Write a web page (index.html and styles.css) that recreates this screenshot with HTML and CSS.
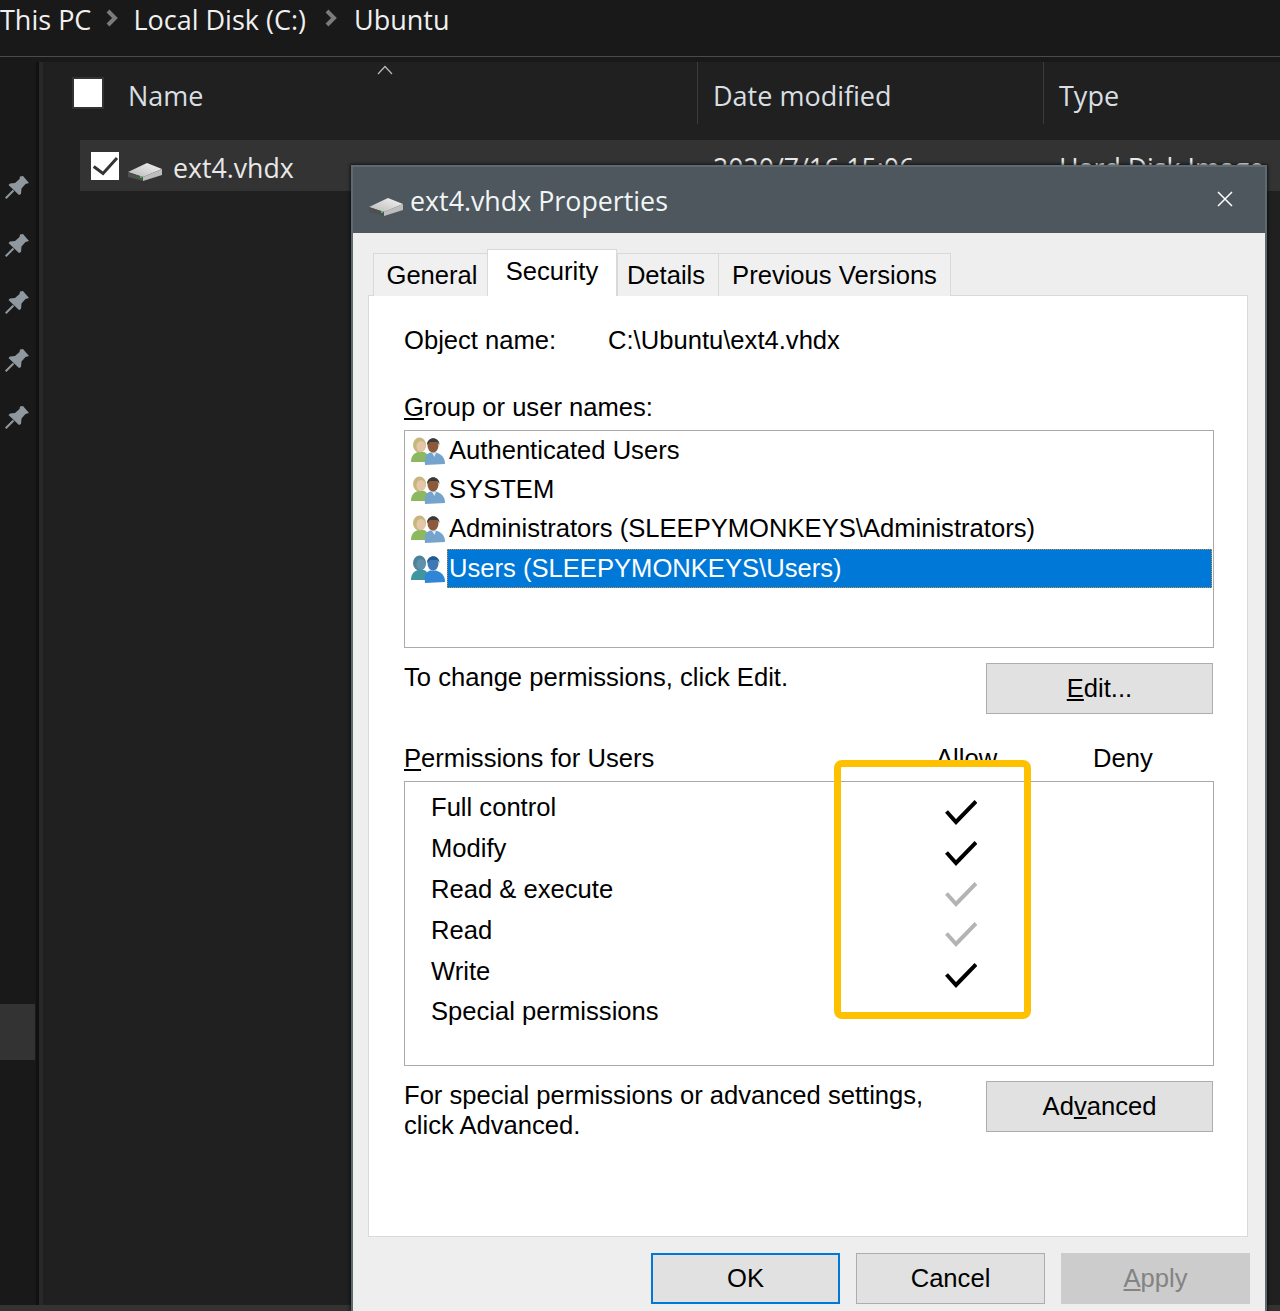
FILE: index.html
```html
<!DOCTYPE html>
<html lang="en">
<head>
<meta charset="utf-8">
<title>ext4.vhdx Properties</title>
<link rel="stylesheet" href="styles.css">
</head>
<body>
<svg class="defs" width="0" height="0" aria-hidden="true">
  <defs>
    <linearGradient id="drive-top" x1="0" y1="1" x2="1" y2="0">
      <stop offset="0" stop-color="#b9b9b9"/>
      <stop offset="1" stop-color="#f4f4f4"/>
    </linearGradient>
    <symbol id="drive" viewBox="0 0 34 20">
      <path d="M0 9 19 0 34 6 15 14Z" fill="url(#drive-top)"/>
      <path d="M0 9 15 14V18L0 14Z" fill="#4f4f4f"/>
      <path d="M15 14 34 6V12L15 18Z" fill="#bdbdbd"/>
      <rect x="12" y="13" width="2" height="2" fill="#3fc24a"/>
    </symbol>
    <symbol id="pin" viewBox="0 0 24 24">
      <path d="M18 1 24 8 20.500 9 16.500 13.500 16 19 14 20 3.500 10 5 8.500 10 8 14.500 4 15 1.500Z" fill="#8e989e"/>
      <path d="M8.500 15.500 0.700 23.300" stroke="#8e989e" stroke-width="2" fill="none"/>
    </symbol>
    <symbol id="people" viewBox="0 0 34 28">
      <path d="M0 25C0 19 3 16 7 15H13C16 16 17 18 17 25Z" fill="#8cb860"/>
      <ellipse cx="8.500" cy="8" rx="6.500" ry="7.500" fill="#c8b77c"/>
      <ellipse cx="10" cy="9.500" rx="4.500" ry="5.500" fill="#e6c6a8"/>
      <path d="M14 28C13 20 15 17 19 15.500H25C30 17 34 20 34 27Z" fill="#74a3cc"/>
      <ellipse cx="22" cy="8.500" rx="5.500" ry="7" fill="#8c5a3a"/>
      <path d="M16 8C16 -1 28.500 -1 28.500 8L26.500 5H19Z" fill="#3a3a3a"/>
      <path d="M21 16 23.500 20 25 16Z" fill="#dfeaf3"/>
    </symbol>
    <symbol id="people-on" viewBox="0 0 34 28">
      <path d="M0 25C0 19 3 16 7 15H13C16 16 17 18 17 25Z" fill="#3f96a0"/>
      <ellipse cx="8.500" cy="8" rx="6.500" ry="7.500" fill="#4f8298"/>
      <ellipse cx="10" cy="9.500" rx="4.500" ry="5.500" fill="#5f90ac"/>
      <path d="M14 28C13 20 15 17 19 15.500H25C30 17 34 20 34 27Z" fill="#2f86d6"/>
      <ellipse cx="22" cy="8.500" rx="5.500" ry="7" fill="#3f78b4"/>
      <path d="M16 8C16 -1 28.500 -1 28.500 8L26.500 5H19Z" fill="#1f5a94"/>
    </symbol>
    <symbol id="tick" viewBox="0 0 32 26">
      <path d="M1.500 12.500 11 23 31 2.500" fill="none" stroke="currentColor" stroke-width="4"/>
    </symbol>
  </defs>
</svg>

<div class="page">
  <header class="crumbs">
    <span>This PC</span>
    <svg class="chevron" viewBox="0 0 14 18"><path d="M3 2 10 9 3 16" fill="none" stroke="#7b7b7b" stroke-width="4"/></svg>
    <span>Local Disk (C:)</span>
    <svg class="chevron chevron-second" viewBox="0 0 14 18"><path d="M3 2 10 9 3 16" fill="none" stroke="#7b7b7b" stroke-width="4"/></svg>
    <span>Ubuntu</span>
  </header>

  <div class="explorer">
    <aside class="nav">
      <svg class="pin"><use href="#pin"/></svg>
      <svg class="pin"><use href="#pin"/></svg>
      <svg class="pin"><use href="#pin"/></svg>
      <svg class="pin"><use href="#pin"/></svg>
      <svg class="pin"><use href="#pin"/></svg>
      <div class="nav-selected"></div>
    </aside>
    <main class="files">
      <div class="columns">
        <div class="col col-name">
          <span class="box-empty"></span>
          <span>Name</span>
          <svg class="sort" viewBox="0 0 16 10"><path d="M1 9 8 1.500 15 9" fill="none" stroke="#bbb" stroke-width="1.200"/></svg>
        </div>
        <div class="col col-date">Date modified</div>
        <div class="col col-type">Type</div>
      </div>
      <div class="file-row">
        <div class="file-name">
          <span class="box-checked">
            <svg class="box-tick" viewBox="0 0 28 28"><path d="M2.700 14.500 12 21.500 26 6" fill="none" stroke="#333" stroke-width="3"/></svg>
          </span>
          <svg class="drive"><use href="#drive"/></svg>
          <span class="file-label">ext4.vhdx</span>
        </div>
        <div class="file-date">2020/7/16 15:06</div>
        <div class="file-type">Hard Disk Image</div>
      </div>
    </main>
  </div>
  <div class="statusbar"></div>

  <section class="dialog">
    <div class="titlebar">
      <svg class="drive"><use href="#drive"/></svg>
      <span class="title-text">ext4.vhdx Properties</span>
      <svg class="close" viewBox="0 0 16 16"><path d="M1 1 15 15M15 1 1 15" stroke="#fff" stroke-width="1.500" fill="none"/></svg>
    </div>
    <div class="dialog-body">
      <div class="tabs">
        <div class="tab tab-general">General</div>
        <div class="tab tab-active">Security</div>
        <div class="tab tab-details">Details</div>
        <div class="tab tab-versions">Previous Versions</div>
      </div>
      <div class="panel">
        <div class="object-row">
          <span class="object-label">Object name:</span>
          <span>C:\Ubuntu\ext4.vhdx</span>
        </div>
        <div class="label label-group"><u>G</u>roup or user names:</div>
        <div class="user-list">
          <div class="user"><svg class="people"><use href="#people"/></svg><span class="user-name">Authenticated Users</span></div>
          <div class="user"><svg class="people"><use href="#people"/></svg><span class="user-name">SYSTEM</span></div>
          <div class="user"><svg class="people"><use href="#people"/></svg><span class="user-name">Administrators (SLEEPYMONKEYS\Administrators)</span></div>
          <div class="user user-selected"><svg class="people"><use href="#people-on"/></svg><span class="user-name">Users (SLEEPYMONKEYS\Users)</span></div>
        </div>
        <div class="action-row">
          <span class="action-text">To change permissions, click Edit.</span>
          <div class="btn btn-wide"><span><u>E</u>dit...</span></div>
        </div>
        <div class="perm-head">
          <span class="perm-title"><u>P</u>ermissions for Users</span>
          <span class="perm-allow">Allow</span>
          <span class="perm-deny">Deny</span>
        </div>
        <div class="perm-list">
          <div class="perm"><span>Full control</span><svg class="tick"><use href="#tick"/></svg></div>
          <div class="perm"><span>Modify</span><svg class="tick"><use href="#tick"/></svg></div>
          <div class="perm"><span>Read &amp; execute</span><svg class="tick tick-off"><use href="#tick"/></svg></div>
          <div class="perm"><span>Read</span><svg class="tick tick-off"><use href="#tick"/></svg></div>
          <div class="perm"><span>Write</span><svg class="tick"><use href="#tick"/></svg></div>
          <div class="perm"><span>Special permissions</span></div>
        </div>
        <div class="action-row">
          <span class="action-text">For special permissions or advanced settings,<br>click Advanced.</span>
          <div class="btn btn-wide"><span>Ad<u>v</u>anced</span></div>
        </div>
      </div>
      <div class="footer">
        <div class="btn btn-foot btn-default">OK</div>
        <div class="btn btn-foot">Cancel</div>
        <div class="btn btn-foot btn-disabled"><span><u>A</u>pply</span></div>
      </div>
    </div>
  </section>

  <div class="highlight"></div>
</div>
</body>
</html>
```

FILE: styles.css
```css
* { box-sizing: border-box; }

html, body {
  margin: 0;
  padding: 0;
  background: #191919;
}

.defs { position: absolute; }

.page {
  position: relative;
  width: 1280px;
  height: 1311px;
  overflow: hidden;
  background: #191919;
  color: #e6e6e6;
  font-family: "Open Sans", "Noto Sans", sans-serif;
}

/* Explorer */
.crumbs {
  display: flex;
  align-items: center;
  height: 57px;
  padding-bottom: 18px;
  border-bottom: 1px solid #4a4a4a;
  font-size: 27px;
  color: #f0f0f0;
}

.chevron {
  width: 14px;
  height: 18px;
  margin: 0 14px 2px 14px;
}

.chevron-second {
  margin: 0 16px 2px 18px;
}

.explorer {
  display: flex;
  height: 1248px;
  padding-top: 5px;
}

.statusbar {
  height: 6px;
  background: #333;
}

.nav {
  display: flex;
  flex-direction: column;
  align-items: flex-start;
  width: 43px;
  padding: 113px 0 0 5px;
  background: linear-gradient(to right, #191919 36px, #111 36px, #111 39px, #282828 39px);
}

.pin {
  width: 24px;
  height: 24px;
  margin-bottom: 33.600px;
  flex: none;
}

.nav-selected {
  width: 35px;
  height: 56px;
  margin: 541px 0 0 -5px;
  background: #333;
}

.files {
  flex: 1;
  background: #202020;
}

.columns {
  display: grid;
  grid-template-columns: 654px 346px 1fr;
  height: 62px;
  font-size: 27px;
  color: #d8dee2;
}

.col {
  display: flex;
  align-items: center;
  padding: 4px 0 0 15px;
  border-left: 1px solid #3c3c3c;
}

.col-name {
  position: relative;
  padding-left: 29px;
  border-left: 0;
  gap: 24px;
}

.box-empty {
  width: 32px;
  height: 32px;
  margin-top: -4px;
  background: #fff;
  border: 2px solid #333;
}

.sort {
  position: absolute;
  left: 334px;
  top: 3px;
  width: 16px;
  height: 10px;
}

.file-row {
  display: grid;
  grid-template-columns: 617px 346px 1fr;
  height: 51px;
  margin: 16px 0 0 37px;
  background: #333;
  font-size: 26.700px;
  color: #e8e8e8;
  align-items: center;
}

.file-name {
  display: flex;
  align-items: center;
  padding-left: 11px;
}

.file-label { padding-top: 4px; }

.box-checked {
  display: flex;
  width: 28px;
  height: 28px;
  background: #fff;
}

.box-tick { width: 28px; height: 28px; }

.drive {
  width: 34px;
  height: 20px;
  flex: none;
  margin: 15px 12px 0 9px;
}

.file-label { margin-left: -1px; }

.file-date,
.file-type { padding: 4px 0 0 16px; }

/* Dialog */
.dialog {
  position: absolute;
  left: 351px;
  top: 165px;
  width: 916px;
  height: 1150px;
  border: 2px solid #5f6a70;
  background: #eee;
  box-shadow: 0 0 3px 1px rgba(0, 0, 0, .6);
}

.titlebar {
  display: flex;
  align-items: center;
  height: 66px;
  padding: 0 32px 0 16px;
  background: #4d575d;
  color: #f2f5f6;
  font-size: 26.800px;
}

.titlebar .drive {
  margin: 16px 7px 0 0;
}

.title-text { flex: 1; }

.close {
  width: 16px;
  height: 16px;
  margin-bottom: 2px;
}

.dialog-body {
  padding: 16px 15px 0;
  color: #000;
  font-family: "Liberation Sans", Arial, sans-serif;
  font-size: 25.600px;
}

.tabs {
  display: flex;
  align-items: flex-end;
  height: 47px;
  padding-left: 5px;
  margin-bottom: -1px;
  position: relative;
}

.tab {
  display: flex;
  align-items: center;
  justify-content: center;
  height: 43px;
  background: #f0f0f0;
  border: 1px solid #d9d9d9;
  border-bottom: 0;
  margin-right: -1px;
}

.tab-general { width: 115px; padding-left: 3px; }
.tab-details { width: 102px; margin-left: 1px; padding-right: 4px; }
.tab-versions { width: 233px; }

.tab-active {
  width: 130px;
  height: 47px;
  padding-bottom: 4px;
  background: #fff;
  position: relative;
  z-index: 1;
}

.panel {
  height: 942px;
  margin-right: 2px;
  padding: 29px 33px 0 35px;
  background: #fff;
  border: 1px solid #d9d9d9;
  line-height: 30px;
}

.object-row {
  display: flex;
  height: 30px;
}

.object-label { width: 204px; }

.label-group { margin-top: 37px; }

.user-list {
  height: 218px;
  margin-top: 8px;
  padding: 0 1px;
  border: 1px solid #aaa;
}

.user {
  display: flex;
  align-items: center;
  height: 39.300px;
}

.people {
  width: 34px;
  height: 28px;
  margin: 0 2px 0 5px;
  flex: none;
}

.user-name {
  flex: 1;
  display: flex;
  align-items: center;
  height: 100%;
  padding: 0 0 2px 2px;
}

.user-selected .user-name {
  background: #0078d7;
  color: #fff;
  outline: 1px dotted #c9904a;
  outline-offset: -1px;
}

.action-row {
  display: flex;
  justify-content: space-between;
  align-items: flex-start;
  height: 51px;
  margin-top: 15px;
}

.action-text { margin-top: -1px; }

.btn {
  display: flex;
  align-items: center;
  justify-content: center;
  height: 51px;
  padding-bottom: 1px;
  background: #e1e1e1;
  border: 1px solid #adadad;
}

.btn-wide {
  width: 227px;
  margin-right: 1px;
}

.perm-head {
  display: flex;
  height: 30px;
  margin-top: 29px;
}

.perm-title { width: 532px; }
.perm-allow { width: 157px; }

.perm-list {
  height: 285px;
  margin-top: 8px;
  padding-top: 5px;
  border: 1px solid #aaa;
}

.perm {
  position: relative;
  display: flex;
  align-items: center;
  height: 40.800px;
  padding-left: 26px;
}

.tick {
  position: absolute;
  left: 540px;
  top: 12px;
  width: 32px;
  height: 26px;
  color: #000;
}

.tick-off { color: #b4b4b4; }

.footer {
  display: flex;
  justify-content: flex-end;
  gap: 16px;
  margin-top: 16px;
}

.btn-foot { width: 189px; }

.btn-default {
  border: 2px solid #0078d7;
}

.btn-disabled {
  background: #ccc;
  border-color: #ccc;
  color: #838383;
}

/* Annotation */
.highlight {
  position: absolute;
  left: 834px;
  top: 760px;
  width: 197px;
  height: 259px;
  border: 7px solid #ffc000;
  border-radius: 8px;
}
```
